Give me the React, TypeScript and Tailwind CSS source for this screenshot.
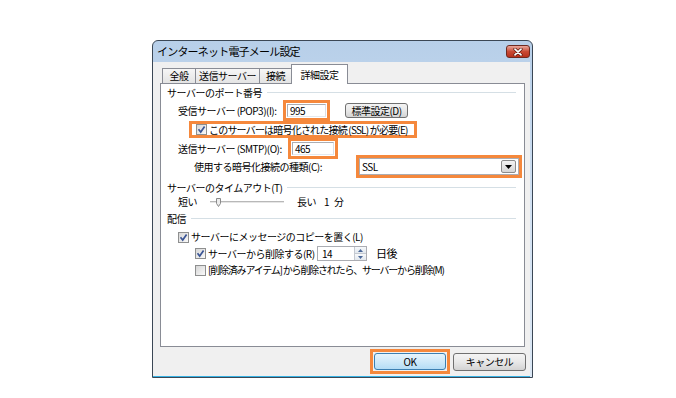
function Check({ checked = false }: { checked?: boolean }) {
  return (
    <span className="flex h-[11px] w-[11px] shrink-0 items-center justify-center border border-[#8e8f8f] bg-white">
      <span className="flex h-[9px] w-[9px] items-center justify-center bg-gradient-to-br from-[#d6d6d6] to-[#fafafa]">
        {checked && (
          <svg width="9" height="9" viewBox="0 0 9 9">
            <path d="M1.5 4.3 L3.7 7 L7.6 1.4" fill="none" stroke="#3b5595" strokeWidth="1.7" />
          </svg>
        )}
      </span>
    </span>
  );
}

function Group({ label, className = "" }: { label: string; className?: string }) {
  return (
    <div className={`flex h-[14px] items-center pl-[6px] pr-[8px] ${className}`}>
      <span>{label}</span>
      <span className="ml-[5px] h-[2px] flex-1 border-t border-b border-t-[#d5dfe5] border-b-white" />
    </div>
  );
}

function WinButton({ children, className = "" }: { children: React.ReactNode; className?: string }) {
  return (
    <div
      className={`flex items-center justify-center rounded-[3px] border border-[#707070] bg-gradient-to-b from-[#f4f4f4] via-[#e8e8e8] to-[#d3d3d3] ${className}`}
    >
      {children}
    </div>
  );
}

function Tab({ label, className = "" }: { label: string; className?: string }) {
  return (
    <div
      className={`flex h-[15px] items-center justify-center border-t border-l border-[#898c95] bg-gradient-to-b from-[#f6f6f6] to-[#e4e4e4] ${className}`}
    >
      {label}
    </div>
  );
}

export default function App() {
  return (
    <div className="h-[398px] w-[676px] bg-white pt-[40px] pl-[152px] font-['Noto_Sans_CJK_JP',sans-serif] text-[10px] leading-none tracking-[-0.5px] whitespace-nowrap text-black">
      <div className="flex h-[338px] w-[381px] flex-col overflow-hidden rounded-t-[6px] border border-[#3b4755] bg-gradient-to-b from-[#b7cfe9] via-[#d2e1f2] to-[#dbe7f4]">
        {/* title bar */}
        <div className="flex h-[21px] shrink-0 items-center">
          <span className="ml-[4px] text-[11px] tracking-[-0.8px]">インターネット電子メール設定</span>
          <div className="mr-[2px] ml-auto flex h-[13px] w-[24px] items-center justify-center rounded-[3px] border border-[#6e2a20] bg-gradient-to-b from-[#e8a79c] via-[#c94a35] to-[#b8301b]">
            <svg width="10" height="8" viewBox="0 0 10 8">
              <path d="M2 1.2 L8 6.8 M8 1.2 L2 6.8" stroke="#5a1d14" strokeWidth="3.2" strokeLinecap="round" />
              <path d="M2 1.2 L8 6.8 M8 1.2 L2 6.8" stroke="#ffffff" strokeWidth="1.7" strokeLinecap="round" />
            </svg>
          </div>
        </div>

        {/* client area */}
        <div className="mr-[2px] flex flex-1 flex-col border-b border-[#37b2e4] bg-[#f0f0f0] pl-[7px] pr-[5px]">
          {/* tabs */}
          <div className="mt-[2px] ml-[2px] flex items-end">
            <Tab label="全般" className="w-[33px]" />
            <Tab label="送信サーバー" className="w-[64px]" />
            <Tab label="接続" className="w-[32px]" />
            <div className="relative z-10 -mb-px flex h-[20px] w-[57px] items-start justify-center border-x border-t border-[#898c95] bg-white pt-[5px]">
              詳細設定
            </div>
          </div>

          {/* panel */}
          <div className="flex h-[264px] flex-col border border-[#898c95] bg-white pt-[2px]">
            <Group label="サーバーのポート番号" />

            {/* POP3 */}
            <div className="flex h-[21px] items-center pl-[17px]">
              <span className="w-[105px]">受信サーバー (POP3)(I):</span>
              <div className="flex h-[21px] w-[47px] border-[3px] border-[#f5883c] p-[1px]">
                <div className="flex flex-1 items-center border border-[#abadb3] border-b-[#e3e9ef] border-r-[#dbdfe6] bg-white pl-[2px]">
                  995
                </div>
              </div>
              <WinButton className="ml-[15px] h-[15px] w-[63px]">標準設定(D)</WinButton>
            </div>

            {/* SSL checkbox */}
            <div className="flex h-[17px] pl-[28px]">
              <div className="flex h-[17px] w-[228px] items-center border-[3px] border-[#f5883c] pl-[4px]">
                <Check checked />
                <span className="ml-[2px] tracking-[-0.8px]">このサーバーは暗号化された接続 (SSL) が必要(E)</span>
              </div>
            </div>

            {/* SMTP */}
            <div className="flex h-[21px] items-center pl-[17px]">
              <span className="w-[110px]">送信サーバー (SMTP)(O):</span>
              <div className="flex h-[21px] w-[50px] border-[3px] border-[#f5883c] p-[1px]">
                <div className="flex flex-1 items-center border border-[#abadb3] border-b-[#e3e9ef] border-r-[#dbdfe6] bg-white pl-[2px]">
                  465
                </div>
              </div>
            </div>

            {/* encryption type */}
            <div className="-mt-[4px] flex h-[23px] items-center pl-[33px]">
              <span className="w-[162px]">使用する暗号化接続の種類(C):</span>
              <div className="flex h-[23px] w-[166px] border-[3px] border-[#f5883c]">
                <div className="flex flex-1 items-center border border-[#abadb3] bg-white pl-[2px]">
                  <span>SSL</span>
                  <div className="mr-[2px] ml-auto flex h-[13px] w-[15px] items-center justify-center rounded-[2px] border border-[#8c8c8c] bg-gradient-to-b from-[#f3f3f3] to-[#d6d6d6]">
                    <svg width="7" height="4" viewBox="0 0 7 4">
                      <path d="M0 0 H7 L3.5 4 Z" fill="#000" />
                    </svg>
                  </div>
                </div>
              </div>
            </div>

            <Group label="サーバーのタイムアウト(T)" className="mt-[3px]" />

            {/* slider */}
            <div className="flex h-[14px] items-center pl-[17px]">
              <span className="w-[32px]">短い</span>
              <div className="relative h-[10px] w-[74px]">
                <div className="mt-[4px] h-[2px] border-t border-b border-t-[#b8b8b8] border-b-[#e6e6e6]" />
                <svg className="absolute top-[1px] left-[6px]" width="5" height="9" viewBox="0 0 5 9">
                  <path d="M0.5 0.5 H4.5 V5.5 L2.5 8.5 L0.5 5.5 Z" fill="#ececec" stroke="#8a8a8a" />
                </svg>
              </div>
              <span className="ml-[13px]">長い</span>
              <span className="ml-[8px]">1</span>
              <span className="ml-[5px]">分</span>
            </div>

            <Group label="配信" className="mt-[3px]" />

            <div className="mt-[3px] flex h-[16px] items-center pl-[17px]">
              <Check checked />
              <span className="ml-[2px]">サーバーにメッセージのコピーを置く(L)</span>
            </div>

            <div className="flex h-[17px] items-center pl-[34px]">
              <Check checked />
              <span className="ml-[2px] w-[109px]">サーバーから削除する(R)</span>
              <div className="flex h-[15px] w-[50px] border border-[#abadb3] bg-white">
                <span className="flex flex-1 items-center pl-[4px]">14</span>
                <div className="flex w-[12px] flex-col">
                  <div className="flex flex-1 items-center justify-center border-b border-l border-[#c4c9d1] bg-gradient-to-b from-[#f7f9fb] to-[#e2e8ee]">
                    <svg width="5" height="3" viewBox="0 0 5 3">
                      <path d="M0 3 H5 L2.5 0 Z" fill="#4b6899" />
                    </svg>
                  </div>
                  <div className="flex flex-1 items-center justify-center border-l border-[#c4c9d1] bg-gradient-to-b from-[#f7f9fb] to-[#e2e8ee]">
                    <svg width="5" height="3" viewBox="0 0 5 3">
                      <path d="M0 0 H5 L2.5 3 Z" fill="#4b6899" />
                    </svg>
                  </div>
                </div>
              </div>
              <span className="ml-[9px] text-[11px]">日後</span>
            </div>

            <div className="flex h-[16px] items-center pl-[34px]">
              <Check />
              <span className="ml-[2px] tracking-[-1.2px]">[削除済みアイテム] から削除されたら、サーバーから削除(M)</span>
            </div>
          </div>

          {/* buttons */}
          <div className="mt-[2px] -mr-[1px] flex items-center justify-end">
            <div className="flex h-[25px] w-[80px] border-[3px] border-[#f5883c] p-[1px]">
              <div className="flex flex-1 items-center justify-center rounded-[3px] border border-[#3c7fb1] bg-gradient-to-b from-[#e6f4fc] via-[#cfe9f9] to-[#b5ddf5]">
                OK
              </div>
            </div>
            <WinButton className="ml-[3px] h-[18px] w-[73px]">キャンセル</WinButton>
          </div>
        </div>
      </div>
    </div>
  );
}
